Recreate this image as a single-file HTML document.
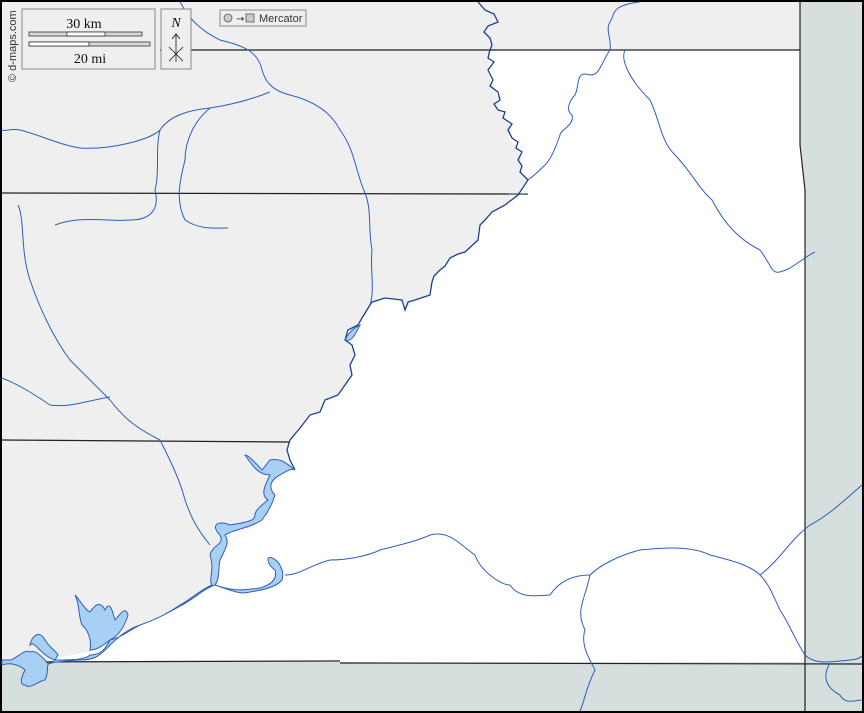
<!DOCTYPE html>
<html><head><meta charset="utf-8"><style>
html,body{margin:0;padding:0;background:#000}
svg{display:block}
</style></head><body>
<svg width="864" height="713" viewBox="0 0 864 713" xmlns="http://www.w3.org/2000/svg">
<rect x="0" y="0" width="864" height="713" fill="#000"/>
<rect x="2" y="2" width="860" height="709" fill="#efefef"/>
<polygon points="800,2 862,2 862,711 805,711 805,190 800,145" fill="#d6dede"/>
<rect x="2" y="662" width="803" height="49" fill="#d6dede"/>
<!-- white region -->
<polygon fill="#fff" points="490,50 800,50 800,145 805,190 805,662 40,662 60,657 90,652 110,642 125,630 140,625 155,619 170,612 182,605 195,598 205,588 215,585 220,578 218,570 220,560 225,550 230,542 225,535 232,530 250,528 262,520 268,512 272,505 275,495 268,488 270,480 280,475 288,470 295,470 290,460 287,450 290,440 300,428 310,415 320,412 325,400 338,395 345,385 352,375 350,365 355,355 352,345 345,340 348,330 358,325 362,318 370,305 385,298 400,300 405,310 415,300 430,295 432,282 440,270 450,258 465,252 478,240 480,225 492,212 505,205 518,195 528,180 520,170 522,160 518,148 508,138 512,128 505,118 498,110 500,100 493,85 488,70"/>
<g stroke="#222" stroke-width="1.2" fill="none">
<line x1="160" y1="50" x2="800" y2="50"/>
<line x1="2" y1="193" x2="528" y2="194"/>
<line x1="2" y1="440" x2="290" y2="442"/>
<line x1="2" y1="662" x2="340" y2="661"/>
<line x1="340" y1="663" x2="862" y2="664"/>
<polyline points="800,2 800,145 805,190 805,711"/>
</g>
<!-- main river -->
<polyline fill="none" stroke="#1d3f8f" stroke-width="1.3" points="478,2 485,10 494,14 498,22 488,26 484,32 490,38 492,45 490,50 488,58 494,62 488,70 493,80 490,86 498,92 500,100 494,104 498,110 505,112 503,118 512,124 508,130 512,138 518,142 516,148 522,152 518,160 522,166 520,172 528,180 518,195 505,205 492,212 485,220 480,225 478,240 465,252 458,254 450,258 445,266 440,270 434,276 432,282 430,295 415,300 408,302 405,310 402,300 385,298 372,302 370,305 362,318 358,325 348,330 345,340 352,345 355,355 350,365 352,375 345,385 338,395 325,400 320,412 310,415 300,428 290,440 287,450 290,460 295,470"/>
<g stroke="#2f5fb8" stroke-width="1" fill="none">
<path d="M370,305 C375,290 370,270 372,250 C368,230 372,210 365,193 C355,170 355,150 340,130 C330,110 310,100 290,95 C270,90 265,80 262,70 C258,50 240,45 220,40 C200,30 190,20 180,2"/>
<path d="M270,92 C250,100 230,105 210,108 C190,110 170,115 160,130 C150,140 110,150 80,148 C60,145 40,135 20,130 C10,128 5,132 2,130"/>
<path d="M160,130 C155,150 160,170 155,190 C160,210 150,220 130,220 C110,222 80,215 55,225"/>
<path d="M210,108 C195,120 185,140 185,160 C180,180 175,200 185,220 C200,230 215,228 228,228"/>
<path d="M18,205 C25,220 20,250 30,280 C40,310 55,340 70,360 C90,380 100,390 110,400 C125,420 140,430 160,440 C170,460 180,480 185,500 C192,520 198,530 210,545"/>
<path d="M2,378 C20,385 35,395 50,405 C70,408 90,400 110,397"/>
<path d="M625,50 C620,60 630,80 650,100 C660,120 660,140 675,155 C690,170 700,190 712,200 C725,225 740,240 760,250 C775,270 770,278 790,268 C800,262 808,255 815,252"/>
<path d="M610,50 C612,40 605,30 610,22 C615,15 610,5 640,2"/>
<path d="M610,50 C600,65 600,75 590,75 C575,70 580,85 575,95 C570,100 565,110 572,115 C575,125 560,130 560,135 C555,150 550,160 545,165 C540,170 535,175 528,180"/>
<path d="M285,575 C300,575 310,565 330,560 C350,560 370,555 380,550 C400,545 420,540 430,535 C450,530 460,545 475,555 C480,570 500,585 510,585 C520,600 540,595 550,595 C560,580 575,575 590,575 C600,565 620,555 640,550 C660,548 690,545 710,555 C730,560 750,565 760,575 C770,585 775,600 780,610 C790,625 795,640 805,655 C815,665 830,662 850,660 C855,660 860,658 862,656"/>
<path d="M760,575 C780,560 790,540 810,525 C830,515 850,495 862,485"/>
<path d="M590,575 C585,600 575,610 585,630 C580,645 590,660 595,670 C585,690 585,700 580,711"/>
<path d="M830,663 C820,680 830,690 840,695 C845,705 855,700 862,700"/>
</g>
<g stroke="#2f5fb8" stroke-width="1" fill="#a8d0f2">
<path d="M295,470 C285,462 280,458 270,460 L262,470 C255,462 248,455 245,455 C252,465 258,475 270,475 C265,485 260,495 268,500 C262,505 255,510 255,515 C255,520 250,522 230,525 C218,520 210,525 220,535 C225,545 212,545 210,555 C215,570 208,580 212,585 C200,590 190,600 180,605 C170,612 155,620 140,625 C130,630 120,638 110,640 C105,650 100,655 90,655 C85,660 70,660 55,660 C50,665 48,665 45,660 C40,655 35,650 30,652 C25,648 15,660 10,660 L2,660 L2,665 C10,662 20,665 25,670 C20,680 20,685 25,685 C30,690 40,680 45,680 C50,670 45,665 50,663 C60,662 70,660 80,660 C95,660 100,655 105,650 C115,640 125,630 140,625 C155,620 170,612 182,605 C195,598 205,588 215,585 C220,578 218,570 220,560 C225,550 230,542 225,535 C232,530 250,528 262,520 C268,512 272,505 275,495 C268,488 270,480 280,475 C288,470 292,468 295,470 Z"/>
<path d="M90,650 C92,640 88,630 82,625 C78,615 80,605 75,595 C80,600 85,610 90,612 C95,605 100,600 105,610 C110,600 112,610 115,620 C120,615 125,605 128,615 C125,625 120,635 110,640 C100,648 95,650 90,650 Z"/>
<path d="M55,660 C40,655 35,640 30,645 C32,635 40,630 45,640 C50,648 55,650 58,655 Z"/>
<path d="M215,585 C230,590 240,595 250,592 C262,590 275,588 282,580 C285,570 278,560 272,558 C265,555 268,565 275,570 C278,580 270,585 260,588 C245,590 235,592 215,585 Z"/>
<path d="M345,340 C350,330 355,328 360,325 C355,335 352,342 345,340 Z"/>
</g>
<rect x="22" y="9" width="133" height="60" fill="#efefef" stroke="#888" stroke-width="1"/>
<text x="84" y="28" font-family="Liberation Serif, serif" font-size="14" text-anchor="middle" fill="#111">30 km</text>
<rect x="29" y="32" width="113" height="4" fill="#d8d8d8" stroke="#333" stroke-width="0.8"/>
<rect x="67" y="32" width="38" height="4" fill="#fff" stroke="#333" stroke-width="0.8"/>
<rect x="29" y="42" width="121" height="4" fill="#d8d8d8" stroke="#333" stroke-width="0.8"/>
<rect x="29" y="42" width="60" height="4" fill="#fff" stroke="#333" stroke-width="0.8"/>
<text x="90" y="63" font-family="Liberation Serif, serif" font-size="14" text-anchor="middle" fill="#111">20 mi</text>
<rect x="161" y="9" width="30" height="60" fill="#efefef" stroke="#888" stroke-width="1"/>
<text x="176" y="27" font-family="Liberation Serif, serif" font-style="italic" font-size="14" text-anchor="middle" fill="#111">N</text>
<g stroke="#111" stroke-width="0.8" fill="none">
<line x1="176" y1="34" x2="176" y2="62"/><polyline points="172,39 176,34 180,39"/>
<line x1="169" y1="47" x2="183" y2="61"/><line x1="183" y1="47" x2="169" y2="61"/>
</g>
<rect x="220" y="10" width="86" height="16" fill="#efefef" stroke="#888" stroke-width="1"/>
<circle cx="228" cy="18" r="4" fill="#ccc" stroke="#555" stroke-width="0.8"/>
<text x="236" y="22" font-family="DejaVu Sans, sans-serif" font-size="10" fill="#333">→</text>
<rect x="246" y="14" width="8" height="8" fill="#ccc" stroke="#555" stroke-width="0.8"/>
<text x="259" y="22" font-family="Liberation Sans, sans-serif" font-size="11" fill="#333">Mercator</text>
<text transform="translate(16,82) rotate(-90)" font-family="Liberation Sans, sans-serif" font-size="11" fill="#333">© d-maps.com</text>
</svg>
</body></html>
